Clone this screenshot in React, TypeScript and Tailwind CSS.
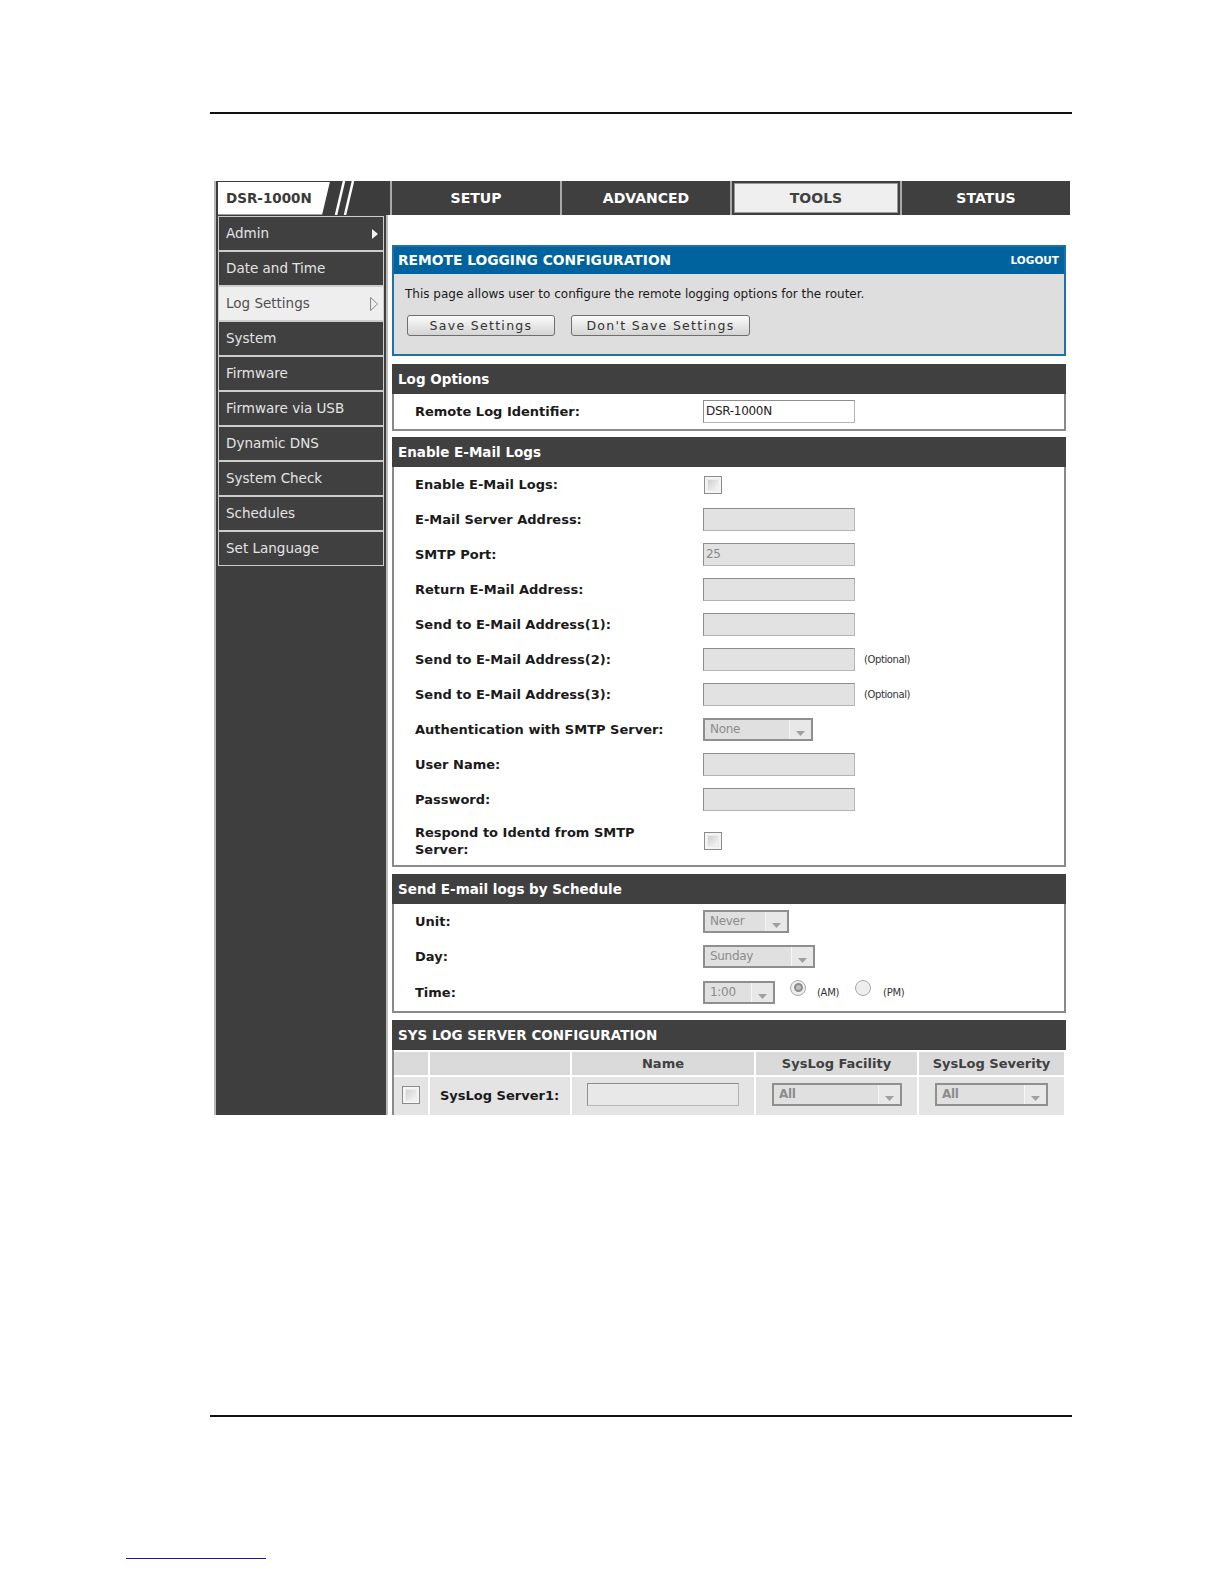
import React from 'react';

const sideItems = [
  'Admin',
  'Date and Time',
  'Log Settings',
  'System',
  'Firmware',
  'Firmware via USB',
  'Dynamic DNS',
  'System Check',
  'Schedules',
  'Set Language',
];

const tabs = ['SETUP', 'ADVANCED', 'TOOLS', 'STATUS'];

function TextBox({ value = '', disabled = true, className = 'w-[152px]' }: { value?: string; disabled?: boolean; className?: string }) {
  return (
    <div
      className={`h-[23px] border border-[#b4b4b4] border-t-[#8e8e8e] border-l-[#8e8e8e] pl-[2px] text-[12px] leading-[20px] tracking-[-0.3px] ${
        disabled ? 'bg-[#e2e2e2] text-[#8a8a8a]' : 'bg-white text-[#222]'
      } ${className}`}
    >
      {value}
    </div>
  );
}

function Select({ value, className }: { value: string; className: string }) {
  return (
    <div className={`flex h-[23px] border-2 border-[#8f8f8f] bg-[#e0e0e0] ${className}`}>
      <div className="flex-1 pl-[5px] text-[12px] leading-[18px] text-[#8c8c8c] tracking-[-0.3px]">{value}</div>
      <div className="w-[22px] border-l border-[#f6f6f6] bg-[#e8e8e8] flex items-end justify-center pb-[3px]">
        <svg width="9" height="5" viewBox="0 0 9 5">
          <path d="M0 0 L9 0 L4.5 5 Z" fill="#a0a0a0" />
        </svg>
      </div>
    </div>
  );
}

function Check() {
  return (
    <div className="w-[18px] h-[18px] border border-[#8c8c8c] bg-[#f4f4f4] p-[2px]">
      <div className="w-full h-full border border-[#ececec] bg-linear-to-br from-[#cfcfcf] to-[#f6f6f6]" />
    </div>
  );
}

function Radio({ checked = false }: { checked?: boolean }) {
  return (
    <div className="w-[16px] h-[16px] rounded-full border border-[#a8a8a8] bg-[#eeeeee] flex items-center justify-center">
      {checked && <div className="w-[9px] h-[9px] rounded-full bg-[#bcbcbc] border-2 border-[#8c8c8c]" />}
    </div>
  );
}

function Row({ label, children, h = 'h-[35px]' }: { label: React.ReactNode; children?: React.ReactNode; h?: string }) {
  return (
    <div className={`flex items-center ${h}`}>
      <div className="w-[309px] pl-[21px] font-bold text-[13px] leading-[17px] text-[#1a1a1a]">{label}</div>
      <div className="flex items-center">{children}</div>
    </div>
  );
}

function Section({ title, children, mt = 'mt-[7px]' }: { title: string; children: React.ReactNode; mt?: string }) {
  return (
    <div className={mt}>
      <div className="h-[30px] bg-[#404040] flex items-center pl-[6px] text-white font-bold text-[13.5px]">{title}</div>
      <div className="border-2 border-t-0 border-[#8a8a8a] bg-white">{children}</div>
    </div>
  );
}

function Optional() {
  return <span className="ml-[9px] text-[10px] text-[#333] tracking-[-0.4px]">(Optional)</span>;
}

export default function App() {
  return (
    <div className="w-full h-[1584px] overflow-hidden bg-white pt-[112px] font-['DejaVu_Sans',sans-serif]">
      <div className="ml-[210px] w-[862px] h-[2px] bg-[#111]" />

      {/* router screenshot */}
      <div className="mt-[67px] ml-[214px] w-[856px] h-[934px] overflow-hidden border-l-2 border-[#b8b8b8] flex flex-col bg-white">
        <div className="h-[37px] flex gap-[2px] bg-[#a9a9a9]">
          <div className="w-[174px] bg-[#3c3c3c] flex items-center pl-[2px]">
            <div className="w-[112px] h-[33px] bg-white [clip-path:polygon(0_0,100%_0,93%_100%,0_100%)] flex items-center pl-[8px] text-[13.5px] font-bold text-[#3a3a3a]">
              DSR-1000N
            </div>
            <svg width="30" height="34" viewBox="0 0 30 34" className="ml-[1px]">
              <line x1="5" y1="34" x2="13" y2="0" stroke="#fff" strokeWidth="2.5" />
              <line x1="14" y1="34" x2="22" y2="0" stroke="#fff" strokeWidth="2.5" />
            </svg>
          </div>
          {tabs.map((t) => (
            <div key={t} className="flex-1 bg-[#3f3f3f] flex">
              {t === 'TOOLS' ? (
                <div className="flex-1 m-[2px] bg-[#efefef] border border-[#9a9a9a] flex items-center justify-center text-[14px] font-bold text-[#404040]">
                  {t}
                </div>
              ) : (
                <div className="flex-1 flex items-center justify-center text-[14px] font-bold text-white">{t}</div>
              )}
            </div>
          ))}
        </div>
        <div className="h-[1px] bg-[#bdbdbd]" />

        <div className="flex flex-1">
          {/* sidebar */}
          <div className="w-[172px] bg-[#3e3e3e] border-r-2 border-[#bcbcbc] pl-[2px] pr-[2px] pt-[1px]">
            {sideItems.map((s) => {
              const active = s === 'Log Settings';
              return (
                <div
                  key={s}
                  className={`h-[35px] border border-[#cdcdcd] flex items-center justify-between pl-[7px] pr-[5px] text-[13.5px] ${
                    active ? 'bg-[#eeeeee] text-[#505050]' : 'bg-[#404040] text-[#e4e4e4]'
                  }`}
                >
                  <span>{s}</span>
                  {s === 'Admin' && (
                    <svg width="6" height="10" viewBox="0 0 6 10">
                      <path d="M0 0 L6 5 L0 10 Z" fill="#f2f2f2" />
                    </svg>
                  )}
                  {active && (
                    <svg width="8" height="14" viewBox="0 0 8 14">
                      <path d="M0.5 0.5 L7.5 7 L0.5 13.5 Z" fill="none" stroke="#8a8a8a" />
                    </svg>
                  )}
                </div>
              );
            })}
          </div>

          {/* content */}
          <div className="flex-1 pl-[4px] pr-[4px] pt-[30px]">
            <div className="border-2 border-[#1f6fa8] bg-[#dedede]">
              <div className="h-[27px] bg-[#00639d] flex items-center justify-between pl-[4px] pr-[5px] text-white font-bold">
                <span className="text-[13.8px]">REMOTE LOGGING CONFIGURATION</span>
                <span className="text-[10.5px]">LOGOUT</span>
              </div>
              <div className="h-[80px] pl-[11px] pt-[12px]">
                <div className="text-[12px] text-[#1a1a1a] leading-[16px]">
                  This page allows user to configure the remote logging options for the router.
                </div>
                <div className="flex gap-[16px] mt-[13px] ml-[2px]">
                  <button className="w-[148px] h-[21px] rounded-[3px] border border-[#6e6e6e] bg-linear-to-b from-[#fbfbfb] to-[#d4d4d4] text-[12.5px] tracking-[1.3px] text-[#333] leading-[19px]">
                    Save Settings
                  </button>
                  <button className="w-[179px] h-[21px] rounded-[3px] border border-[#6e6e6e] bg-linear-to-b from-[#fbfbfb] to-[#d4d4d4] text-[12.5px] tracking-[1.3px] text-[#333] leading-[19px]">
                    Don't Save Settings
                  </button>
                </div>
              </div>
            </div>

            <Section title="Log Options" mt="mt-[8px]">
              <Row label="Remote Log Identifier:">
                <TextBox value="DSR-1000N" disabled={false} />
              </Row>
            </Section>

            <Section title="Enable E-Mail Logs" mt="mt-[6px]">
              <Row label="Enable E-Mail Logs:">
                <div className="ml-[1px]">
                  <Check />
                </div>
              </Row>
              <Row label="E-Mail Server Address:">
                <TextBox />
              </Row>
              <Row label="SMTP Port:">
                <TextBox value="25" />
              </Row>
              <Row label="Return E-Mail Address:">
                <TextBox />
              </Row>
              <Row label="Send to E-Mail Address(1):">
                <TextBox />
              </Row>
              <Row label="Send to E-Mail Address(2):">
                <TextBox />
                <Optional />
              </Row>
              <Row label="Send to E-Mail Address(3):">
                <TextBox />
                <Optional />
              </Row>
              <Row label="Authentication with SMTP Server:">
                <Select value="None" className="w-[110px]" />
              </Row>
              <Row label="User Name:">
                <TextBox />
              </Row>
              <Row label="Password:">
                <TextBox />
              </Row>
              <Row
                h="h-[48px]"
                label={
                  <span>
                    Respond to Identd from SMTP
                    <br />
                    Server:
                  </span>
                }
              >
                <div className="ml-[1px]">
                  <Check />
                </div>
              </Row>
            </Section>

            <Section title="Send E-mail logs by Schedule">
              <Row label="Unit:">
                <Select value="Never" className="w-[86px]" />
              </Row>
              <Row label="Day:">
                <Select value="Sunday" className="w-[112px]" />
              </Row>
              <Row label="Time:" h="h-[37px]">
                <Select value="1:00" className="w-[72px]" />
                <div className="ml-[15px] -mt-[10px]">
                  <Radio checked />
                </div>
                <span className="ml-[11px] text-[10px] text-[#333] tracking-[-0.3px]">(AM)</span>
                <div className="ml-[16px] -mt-[10px]">
                  <Radio />
                </div>
                <span className="ml-[12px] text-[10px] text-[#333] tracking-[-0.3px]">(PM)</span>
              </Row>
            </Section>

            <div className="mt-[7px]">
              <div className="h-[30px] bg-[#404040] flex items-center pl-[6px] text-white font-bold text-[13.5px]">
                SYS LOG SERVER CONFIGURATION
              </div>
              <div className="border-l-2 border-[#8a8a8a] bg-white pt-[2px] grid grid-cols-[34px_140px_182px_161px_145px] gap-[2px] font-bold text-[13px] text-[#404040]">
                <div className="h-[23px] bg-[#dadada]" />
                <div className="h-[23px] bg-[#dadada]" />
                <div className="h-[23px] bg-[#dadada] flex items-center justify-center">Name</div>
                <div className="h-[23px] bg-[#dadada] flex items-center justify-center">SysLog Facility</div>
                <div className="h-[23px] bg-[#dadada] flex items-center justify-center">SysLog Severity</div>

                <div className="h-[40px] bg-[#e4e4e4] flex justify-center pt-[9px]">
                  <Check />
                </div>
                <div className="h-[40px] bg-[#e4e4e4] pl-[10px] pt-[9px] text-[#1a1a1a]">SysLog Server1:</div>
                <div className="h-[40px] bg-[#e4e4e4] pl-[15px] pt-[6px]">
                  <TextBox className="w-[152px] bg-[#e8e8e8]" />
                </div>
                <div className="h-[40px] bg-[#e4e4e4] pl-[16px] pt-[6px]">
                  <Select value="All" className="w-[130px]" />
                </div>
                <div className="h-[40px] bg-[#e4e4e4] pl-[16px] pt-[6px]">
                  <Select value="All" className="w-[113px]" />
                </div>
              </div>
            </div>
          </div>
        </div>
      </div>

      <div className="mt-[300px] ml-[210px] w-[862px] h-[2px] bg-[#111]" />
      <div className="mt-[141px] ml-[126px] w-[140px] h-[1px] bg-[#1a1a8c]" />
    </div>
  );
}
